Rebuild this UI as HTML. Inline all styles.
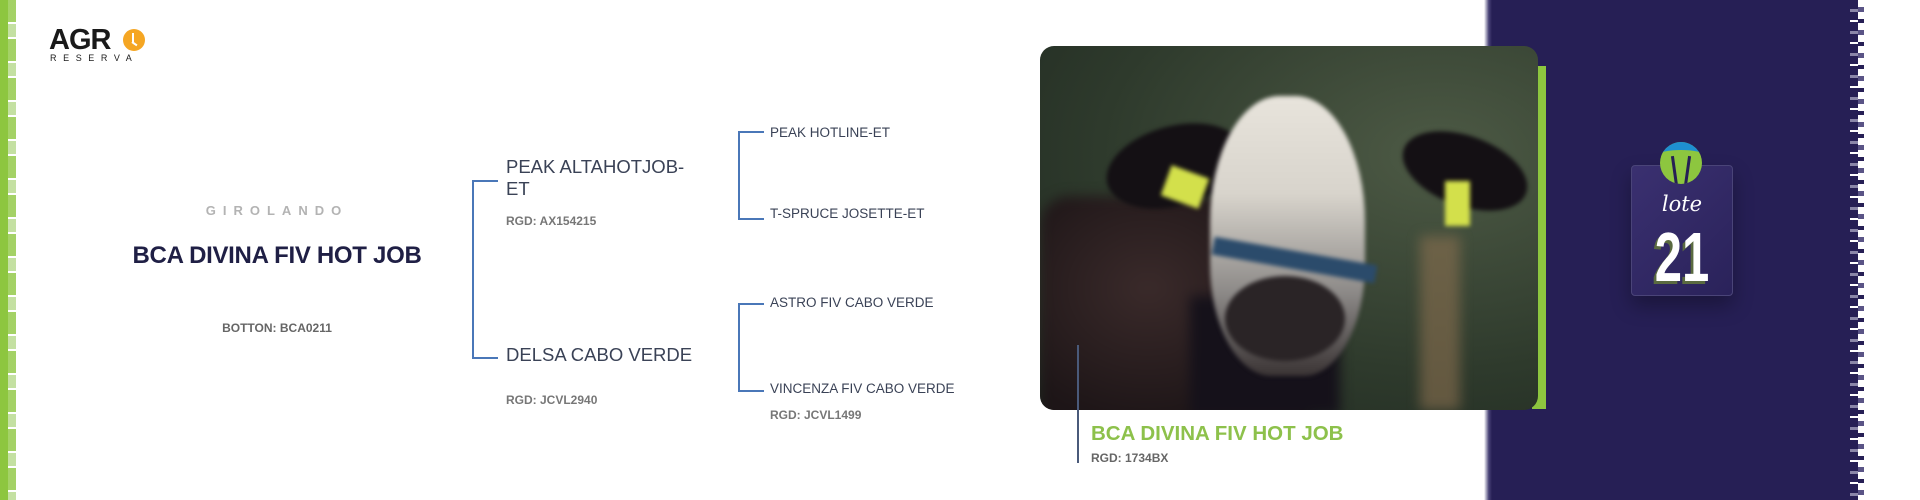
<!DOCTYPE html>
<html><head><meta charset="utf-8"><style>
*{margin:0;padding:0;box-sizing:border-box}
body{width:1920px;height:500px;overflow:hidden;background:#fff;position:relative;font-family:"Liberation Sans",sans-serif}
.a{position:absolute;white-space:nowrap}
.ln{position:absolute;background:#4a77b8}
.t{color:#3a4256;font-size:13.5px}
.r{color:#777;font-size:12px;font-weight:bold}
</style></head><body>
<div class="a" style="left:0;top:0;width:8px;height:500px;background:#8dc63f"></div>
<div class="a" style="left:8px;top:0;width:8px;height:500px;background:repeating-linear-gradient(180deg,#8dc63f 0 22px,#fff 22px 24px,#b5d98a 24px 37px,#fff 37px 39px);opacity:.8"></div>
<div class="a" style="left:49px;top:24px;font-size:29px;font-weight:bold;color:#1a1a1a;letter-spacing:-1px">AGR</div>
<div class="a" style="left:123px;top:29px;width:22px;height:22px;border-radius:50%;background:#f5a623"></div>
<div class="a" style="left:132px;top:33px;width:2px;height:9px;background:#fff"></div>
<div class="a" style="left:132px;top:41px;width:6px;height:2px;background:#fff;transform:rotate(35deg);transform-origin:left"></div>
<div class="a" style="left:50px;top:53px;font-size:9px;color:#1a1a1a;letter-spacing:6.6px">RESERVA</div>
<div class="a" style="left:177px;top:203px;width:200px;text-align:center;font-size:13px;font-weight:bold;color:#b3b3b3;letter-spacing:7px">GIROLANDO</div>
<div class="a" style="left:127px;top:242px;width:300px;text-align:center;font-size:24px;font-weight:bold;color:#1f1f45;letter-spacing:-0.3px">BCA DIVINA FIV HOT JOB</div>
<div class="a" style="left:177px;top:321px;width:200px;text-align:center;font-size:12px;font-weight:bold;color:#666">BOTTON: BCA0211</div>
<div class="ln" style="left:472px;top:180px;width:2px;height:179px"></div>
<div class="ln" style="left:472px;top:180px;width:26px;height:2px"></div>
<div class="ln" style="left:472px;top:357px;width:26px;height:2px"></div>
<div class="a t" style="left:506px;top:156px;font-size:18.5px;line-height:22px">PEAK ALTAHOTJOB-<br>ET</div>
<div class="a r" style="left:506px;top:214px">RGD: AX154215</div>
<div class="a t" style="left:506px;top:344px;font-size:18.5px">DELSA CABO VERDE</div>
<div class="a r" style="left:506px;top:393px">RGD: JCVL2940</div>
<div class="ln" style="left:738px;top:131px;width:2px;height:89px"></div>
<div class="ln" style="left:738px;top:131px;width:26px;height:2px"></div>
<div class="ln" style="left:738px;top:218px;width:26px;height:2px"></div>
<div class="a t" style="left:770px;top:125px">PEAK HOTLINE-ET</div>
<div class="a t" style="left:770px;top:206px">T-SPRUCE JOSETTE-ET</div>
<div class="ln" style="left:738px;top:303px;width:2px;height:89px"></div>
<div class="ln" style="left:738px;top:303px;width:26px;height:2px"></div>
<div class="ln" style="left:738px;top:390px;width:26px;height:2px"></div>
<div class="a t" style="left:770px;top:295px">ASTRO FIV CABO VERDE</div>
<div class="a t" style="left:770px;top:381px">VINCENZA FIV CABO VERDE</div>
<div class="a r" style="left:770px;top:408px">RGD: JCVL1499</div>
<div class="a" style="left:1490px;top:0;width:362px;height:500px;background:#261f55"></div>
<div class="a" style="left:1484px;top:0;width:8px;height:500px;background:linear-gradient(90deg,#fff,#4a4478 60%,#261f55)"></div>
<div class="a" style="left:1850px;top:0;width:8px;height:500px;background:repeating-linear-gradient(180deg,#261f55 0 9px,#8a86a8 9px 12px,#261f55 12px 20px,#fff 20px 22px)"></div>
<div class="a" style="left:1858px;top:0;width:6px;height:500px;background:repeating-linear-gradient(180deg,#fff 0 7px,#5a5486 7px 12px,#fff 12px 19px,#261f55 19px 23px)"></div>
<div class="a" style="left:1532px;top:66px;width:14px;height:343px;background:#8dc63f"></div>
<div class="a" style="left:1040px;top:46px;width:498px;height:364px;border-radius:14px;overflow:hidden;background:radial-gradient(ellipse at 80% 30%,#4d5a45,#2e3a2c 60%,#1f2820)">
 <div style="position:absolute;inset:0;filter:blur(6px)">
 <div class="a" style="left:0;top:150px;width:270px;height:230px;background:radial-gradient(ellipse at 40% 40%,#3a2a2a,#1d1517 70%);border-radius:30px 60px 0 0"></div>
 <div class="a" style="left:380px;top:190px;width:40px;height:174px;background:#8b6f50;opacity:.6"></div>
 <div class="a" style="left:150px;top:250px;width:150px;height:120px;background:#15111a"></div>
 </div>
 <div style="position:absolute;inset:0;filter:blur(2px)">
 <div class="a" style="left:65px;top:80px;width:140px;height:80px;border-radius:50%;background:#141014;transform:rotate(-15deg)"></div>
 <div class="a" style="left:360px;top:90px;width:130px;height:70px;border-radius:50%;background:#141014;transform:rotate(20deg)"></div>
 <div class="a" style="left:170px;top:50px;width:155px;height:280px;border-radius:45% 45% 40% 40%;background:linear-gradient(180deg,#e8e4dc,#d8d4cc 35%,#8d8a88 70%,#3a3434)"></div>
 <div class="a" style="left:185px;top:230px;width:120px;height:85px;border-radius:50%;background:#2a2426"></div>
 <div class="a" style="left:172px;top:205px;width:165px;height:18px;background:#2b4b6b;transform:rotate(10deg)"></div>
 <div class="a" style="left:125px;top:125px;width:40px;height:32px;background:#d3e04b;transform:rotate(20deg)"></div>
 <div class="a" style="left:405px;top:135px;width:25px;height:45px;background:#d3e04b"></div>
 </div>
</div>
<div class="ln" style="left:1077px;top:345px;width:2px;height:118px;background:#4a5a7a"></div>
<div class="a" style="left:1091px;top:422px;font-size:20.5px;font-weight:bold;color:#8dc14b">BCA DIVINA FIV HOT JOB</div>
<div class="a r" style="left:1091px;top:451px;color:#666">RGD: 1734BX</div>
<div class="a" style="left:1631px;top:165px;width:102px;height:131px;border:1px solid #4a4478;border-radius:4px;background:linear-gradient(135deg,#3a3070,#2a225a);box-shadow:0 10px 20px rgba(0,0,0,.3)"></div>
<div class="a" style="left:1660px;top:142px;width:42px;height:42px;border-radius:50%;background:#8dc63f;overflow:hidden">
 <div class="a" style="left:0;top:0;width:42px;height:12px;background:#1e8fd0"></div>
 <div class="a" style="left:-2px;top:8px;width:46px;height:10px;border-radius:50%;background:#8dc63f"></div>
 <div class="a" style="left:13px;top:14px;width:3px;height:30px;background:#261f55;transform:rotate(-8deg)"></div>
 <div class="a" style="left:26px;top:14px;width:3px;height:30px;background:#261f55;transform:rotate(8deg)"></div>
</div>
<div class="a" style="left:1651px;top:192px;width:62px;text-align:center;font-family:'DejaVu Serif',serif;font-style:italic;font-size:21px;color:#fff">lote</div>
<div class="a" style="left:1640px;top:222px;width:84px;text-align:center;font-size:70px;font-weight:bold;color:#fff;transform:scaleX(.7);text-shadow:-4px 3px 0 #5a6a40;line-height:70px">21</div>
</body></html>
